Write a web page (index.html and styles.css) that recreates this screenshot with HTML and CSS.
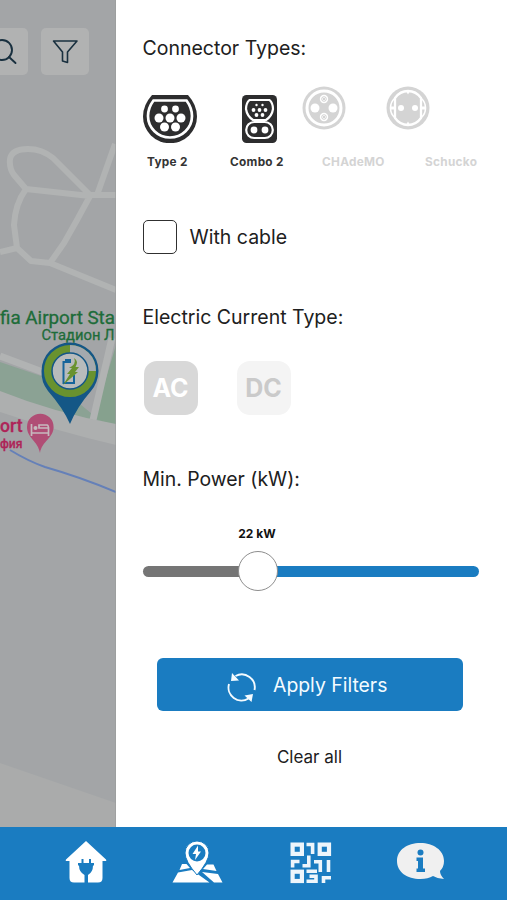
FILE: index.html
```html
<!DOCTYPE html>
<html lang="en">
<head>
<meta charset="utf-8">
<title>Charging station filters</title>
<link rel="stylesheet" href="styles.css">
</head>
<body>
<div class="content">
  <div class="map">
    <svg width="116" height="827" viewBox="0 0 116 827">
      <rect width="116" height="827" fill="#a3a5a7"/>
      <path d="M0 763L116 803V827H0Z" fill="#aaabab"/>
      <path d="M0 362L50 379L92 414L116 424V442L0 402Z" fill="#8ba294"/>
      <path d="M116 345L94 418L116 426Z" fill="#86a18e"/>
      <g fill="none" stroke="#b1b3b3" stroke-width="6" stroke-linejoin="round">
        <path d="M26 189L14 175Q9 168 10 159Q12 149 28 149Q42 149 53 158L90 195H116M26 189L90 196L77 220L64 243L50 263L31 261L17 248L14 225Q15 204 26 189ZM17 248L0 252M50 263L116 290M97 195L115 144"/>
        <path d="M0 356L48 374M112 338L93 420" stroke-width="7"/>
      </g>
      <path d="M0 391Q55 413 116 424V445Q60 432 0 412Z" fill="#adafaf"/>
      <path d="M10 450Q28 461 45 467Q80 477 116 492" fill="none" stroke="#6580b8" stroke-width="2"/>
      <g class="map-label">
        <text x="0" y="324" font-size="18.2" textLength="115" lengthAdjust="spacingAndGlyphs">fia Airport Sta</text>
        <text x="41.500" y="340" font-size="14" textLength="73" lengthAdjust="spacingAndGlyphs">Стадион Л</text>
      </g>
      <g class="map-hotel">
        <text x="0" y="431.500" font-size="18" textLength="22.500" lengthAdjust="spacingAndGlyphs">ort</text>
        <text x="0" y="448" font-size="13" textLength="22.500" lengthAdjust="spacingAndGlyphs">фия</text>
      </g>
      <path d="M40 453C38 441 27 438 27 427A13.300 13.300 0 0 1 53.600 427C53.600 438 42 441 40 453Z" fill="#b04d75"/>
      <path d="M31.500 424V436M31.500 433H48.500V436M48.500 433V428H39V425H47Q48.500 425 48.500 429" fill="none" stroke="#c6b9be" stroke-width="1.700"/>
      <circle cx="35.500" cy="428" r="2" fill="#c6b9be"/>
      <path d="M70 424Q63 408 48 391Q41 382 41.500 371A28.500 28.500 0 0 1 98.500 371Q98 383 91 391Q77 407 70 424Z" fill="#145786"/>
      <circle cx="70" cy="371" r="22" fill="none" stroke="#69922f" stroke-width="8"/>
      <path d="M70 349A22 22 0 0 1 92 371" fill="none" stroke="#a4a9ae" stroke-width="8"/>
      <circle cx="70" cy="371" r="18" fill="#b8bbbc" stroke="#145786" stroke-width="1.500"/>
      <path d="M71 362H63.500V383H74V375M66 362V360H71" fill="none" stroke="#17659b" stroke-width="2"/>
      <path d="M74 358Q79 361 75.500 367H79L75 372H78L63 385L70 374H67L72 368H69Q77 364 74 358Z" fill="#69922f"/>
      <rect x="-20" y="28" width="48" height="47" rx="5" fill="#b1b2b2"/>
      <rect x="41" y="28" width="48" height="47" rx="5" fill="#b1b2b2"/>
      <g fill="none" stroke="#19303f" stroke-width="1.900" stroke-linecap="round" stroke-linejoin="round">
        <circle cx="2" cy="50" r="10"/><path d="M9 57L15.500 63"/>
        <path d="M53.500 41H77L67.500 52V62.500L62.500 61V52Z" stroke-width="1.600"/>
      </g>
      <path d="M115.500 0V827" stroke="#989a9b" stroke-width=".6"/>
    </svg>
  </div>
  <main class="panel">
    <h2 class="heading connectors-title">Connector Types:</h2>
    <div class="plug-icons">
      <svg class="type2" width="54" height="48" viewBox="0 0 54 48">
        <path d="M9 0H45Q54 10 54 21.500A26.800 26.500 0 0 1 0 21.500Q0 10 9 0Z" fill="#2d2d2e"/>
        <path d="M10.500 5.500H43.500Q49 13 49 21A22 21.500 0 0 1 5 21Q5 13 10.500 5.500Z" fill="none" stroke="#fff" stroke-width="2.700"/>
        <g fill="#fff"><circle cx="21.500" cy="14" r="3.400"/><circle cx="32.500" cy="14" r="3.400"/><circle cx="16" cy="23" r="4.500"/><circle cx="27" cy="23" r="4.500"/><circle cx="38" cy="23" r="4.500"/><circle cx="21.500" cy="32" r="4.500"/><circle cx="32.500" cy="32" r="4.500"/></g>
      </svg>
      <svg class="combo" width="35" height="48" viewBox="0 0 35 48">
        <rect width="35" height="48" rx="4.500" fill="#2d2d2e"/>
        <g fill="none" stroke="#fff" stroke-width="2.200"><path d="M7.500 5H27.500Q31 8 31 14Q30 21 24 25H11Q5 21 4 14Q4 8 7.500 5Z"/><rect x="4.200" y="27" width="26.600" height="16" rx="8"/></g>
        <g fill="#fff"><circle cx="14.500" cy="10" r="1.200"/><circle cx="20.500" cy="10" r="1.200"/><circle cx="11.500" cy="15" r="1.900"/><circle cx="17.500" cy="15" r="1.900"/><circle cx="23.500" cy="15" r="1.900"/><circle cx="14.500" cy="20" r="1.900"/><circle cx="20.500" cy="20" r="1.900"/><circle cx="12" cy="35" r="3.400"/><circle cx="23" cy="35" r="3.400"/></g>
      </svg>
      <svg class="chademo" width="44" height="44" viewBox="0 0 44 44">
        <circle cx="22" cy="22" r="21.500" fill="#d4d4d4"/><circle cx="22" cy="22" r="17" fill="none" stroke="#fff" stroke-width="3"/>
        <g fill="#fff"><circle cx="13" cy="22" r="4.500"/><circle cx="31" cy="22" r="4.500"/><circle cx="22" cy="13" r="4.200"/><circle cx="22" cy="31" r="4.200"/></g>
        <g fill="none" stroke="#d4d4d4"><circle cx="22" cy="13" r="2.300"/><circle cx="22" cy="31" r="2.300"/><path d="M20.500 11.500L23.500 14.500M23.500 11.500L20.500 14.500M20.500 29.500L23.500 32.500M23.500 29.500L20.500 32.500"/></g>
      </svg>
      <svg class="schucko" width="44" height="44" viewBox="0 0 44 44">
        <circle cx="22" cy="22" r="21.500" fill="#d4d4d4"/>
        <path d="M9 12Q14 5 22 5T35 12V32Q30 39 22 39T9 32Z" fill="none" stroke="#fff" stroke-width="2.300"/>
        <path d="M9 12Q4.500 16 4.500 22T9 32M35 12Q39.500 16 39.500 22T35 32" fill="none" stroke="#fff" stroke-width="1.600"/>
        <g fill="#fff"><circle cx="15" cy="22" r="3"/><circle cx="29" cy="22" r="3"/><path d="M4 20.500H9V23.500H4ZM35 20.500H40V23.500H35ZM20 5H24L22 8.500ZM20 39H24L22 35.500Z"/></g>
      </svg>
    </div>
    <div class="plug-labels">
      <span>Type 2</span><span>Combo 2</span><span class="off">CHAdeMO</span><span class="off">Schucko</span>
    </div>
    <label class="cable"><span class="box"></span><span class="cable-text">With cable</span></label>
    <h2 class="heading current-title">Electric Current Type:</h2>
    <div class="currents"><button class="current ac">AC</button><button class="current dc">DC</button></div>
    <h2 class="heading power-title">Min. Power (kW):</h2>
    <div class="power-value"><span>22 kW</span></div>
    <div class="slider"><span class="low"></span><span class="thumb"></span><span class="high"></span></div>
    <button class="apply">
      <svg width="30" height="30" viewBox="0 0 30 30">
        <g fill="none" stroke="#f4fbff" stroke-width="1.900"><path d="M8.500 4A13 13 0 0 1 27.500 18"/><path d="M2 12A13 13 0 0 0 21.500 26.500"/></g>
        <path d="M5 1L4 9L12 8.500ZM17.500 23.500L26 22L24.500 30Z" fill="#f4fbff"/>
      </svg>
      <span>Apply Filters</span>
    </button>
    <button class="clear">Clear all</button>
  </main>
</div>
<nav class="tabs">
  <svg class="home" width="42" height="42" viewBox="0 0 42 42">
    <path d="M21 0L41 18.500Q42 20 40 20H37.500V37Q37.500 41.500 33 41.500H23V34Q28 31 28 24.500H29V22H26V18H24V22H18.500V18H16.500V22H13V24.500H14Q14 31 19.500 34V41.500H9Q4.500 41.500 4.500 37V20H2Q0 20 1 18.500Z" fill="#fff"/>
  </svg>
  <svg class="route" width="52" height="42" viewBox="0 0 52 42">
    <path d="M11 23H15.500L19 27L8.500 29ZM36 23.500H42.500L45.500 30L32 28ZM7 31.500L21 29L38.500 41.500H1.500ZM31 31L47 33L51.500 41.500H43Z" fill="#fff"/>
    <path d="M26 34Q14 20 14 12A12 12 0 0 1 38 12Q38 20 26 34Z" fill="#fff" stroke="#1a7cc1" stroke-width="1"/>
    <circle cx="26" cy="12" r="8.500" fill="#1a7cc1"/><path d="M27 4.500L21.500 13H25L24 19L30 10.500H27Z" fill="#fff"/>
  </svg>
  <svg class="qr" width="42" height="42" viewBox="0 0 42 42">
    <g fill="none" stroke="#edf5fb" stroke-width="4.200"><rect x="2.600" y="2.600" width="9.300" height="9.300"/><rect x="29.700" y="2.600" width="9.300" height="9.300"/><rect x="2.600" y="29.700" width="9.300" height="9.300"/></g>
    <path d="M16.500 2.500H22.600V12M2.600 25.500V19.500H9.500M18.800 13.500V23.700H12.500M24 19.800H30.300V30M38.500 18V30M16.500 29.300H27M19.500 34.200H26V39.300H16.500M33.500 41V35.700H41" fill="none" stroke="#edf5fb" stroke-width="3.600"/>
  </svg>
  <svg class="info" width="47" height="38" viewBox="0 0 47 38">
    <path d="M23.500 0C36 0 47 7 47 18Q47 24 43 28Q43 32 47 36Q41 36 36 33Q31 36 23.500 36C10 36 0 29 0 18S10 0 23.500 0Z" fill="#f0f0f0"/>
    <circle cx="23.500" cy="9.500" r="3" fill="#1a7cc1"/><path d="M19.500 14.500H26V25.500H28V29H19.500V25.500H21V18H19.500Z" fill="#1a7cc1"/>
  </svg>
</nav>
</body>
</html>
```
FILE: styles.css
```css
* { box-sizing: border-box; }
body { margin: 0; width: 507px; height: 900px; overflow: hidden; font-family: Inter, sans-serif; color: #202020; background: #fff; }
button { border: 0; padding: 0; font-family: inherit; }
svg { display: block; flex: none; }
.content { display: flex; height: 827px; }
.map { width: 116px; flex: none; overflow: hidden; }
.map text { font-family: Roboto, sans-serif; }
.map-label { fill: #1d6c39; stroke: #1d6c39; stroke-width: .3px; }
.map-hotel { fill: #ae2458; stroke: #ae2458; stroke-width: .3px; font-weight: 500; }
.panel { flex: 1; display: flex; flex-direction: column; align-items: flex-start; padding: 36px 0 0 26.5px; }
.heading { margin: 0; height: 24px; line-height: 24px; font-size: 19.5px; font-weight: 400; white-space: nowrap; }
.connectors-title { line-height: 24px; }
.plug-icons { display: flex; height: 58px; margin-top: 26px; }
.type2 { margin-top: 9px; }
.combo { margin: 9px 0 0 45.5px; }
.chademo { margin-left: 25px; }
.schucko { margin-left: 40px; }
.plug-labels { display: grid; grid-template-columns: 83px 92px 103px 60px; margin: 9px 0 0 4.5px; height: 16px; line-height: 18px; font-size: 11.8px; font-weight: 700; letter-spacing: .3px; white-space: nowrap; color: #343434; }
.plug-labels .off { color: #d4d4d4; }
.cable { display: flex; gap: 13px; margin-top: 51px; height: 34px; }
.box { width: 34px; height: 34px; border: 1.5px solid #303030; border-radius: 5px; }
.cable-text { font-size: 19.5px; line-height: 34px; }
.current-title { margin-top: 52px; line-height: 23px; }
.currents { display: flex; gap: 39px; margin: 31px 0 0 1px; }
.current { width: 54px; height: 54px; border-radius: 13px; font-size: 25px; font-weight: 700; line-height: 54px; }
.ac { background: #d8d8d8; color: #fff; }
.dc { background: #f4f4f4; color: #cacaca; }
.power-title { margin-top: 52px; font-size: 19.4px; }
.power-value { width: 229px; margin-top: 34px; height: 16px; line-height: 17px; text-align: center; font-size: 12px; font-weight: 700; color: #111; }
.slider { display: flex; align-items: center; width: 336px; height: 40px; margin-top: 10px; }
.low { width: 96px; height: 11px; background: #757575; border-radius: 6px 0 0 6px; }
.thumb { width: 40px; height: 40px; margin: 0 -1px; border: 1.5px solid #8d8d8d; border-radius: 50%; background: #fff; z-index: 1; }
.high { flex: 1; height: 11px; background: #1a7cc1; border-radius: 0 6px 6px 0; }
.apply { display: flex; align-items: center; width: 306px; height: 53px; margin: 67px 0 0 14.5px; padding: 5px 0 0 70px; gap: 16px; background: #1a7cc1; color: #f4fbff; border-radius: 6px; font-size: 19.4px; }
.apply span { margin-top: -4px; white-space: nowrap; }
.clear { width: 334px; height: 24px; line-height: 25px; margin-top: 34px; background: none; font-size: 17px; color: #202020; }
.tabs { display: flex; align-items: flex-start; height: 73px; background: #1a7cc1; }
.home { margin: 14px 0 0 65px; }
.route { margin: 14px 0 0 64px; }
.qr { margin: 15px 0 0 67px; }
.info { margin: 16px 0 0 65px; }
```
